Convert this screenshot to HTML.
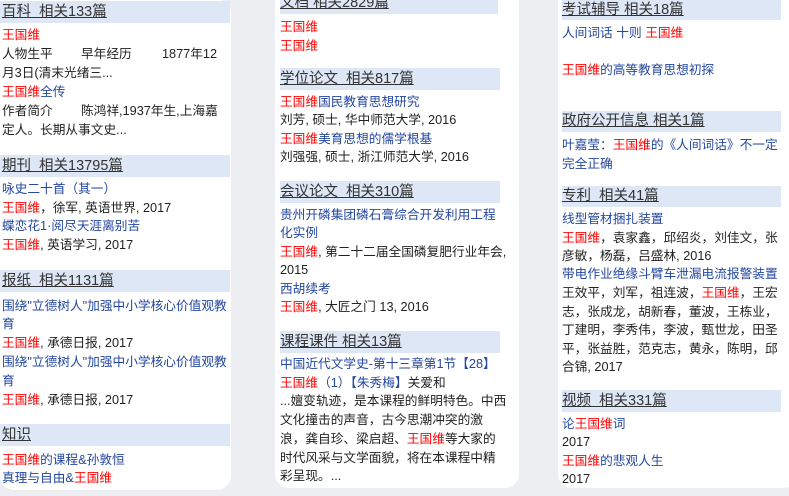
<!DOCTYPE html>
<html><head><meta charset="utf-8"><style>
html,body{margin:0;padding:0}
body{width:789px;height:496px;overflow:hidden;background:#eceef1;position:relative;font-family:"Liberation Sans","Noto Sans CJK SC",sans-serif;font-size:12.7px;color:#222}
.p{position:absolute;background:#fff;border-radius:0 0 14px 14px}
.l{position:absolute;height:19px;line-height:19px;white-space:nowrap}
.h{position:absolute;height:22px;line-height:22px;background:#dde7f5;font-size:14.5px;color:#333}
.h span{text-decoration:underline}
.r{color:#f00}.b{color:#2447a0}
</style></head><body>
<div class="p" style="left:0;top:0;width:231px;height:490px;border-radius:0 12px 14px 14px"></div>
<div class="p" style="left:275px;top:0;width:244px;height:488px"></div>
<div class="p" style="left:558px;top:0;width:240px;height:488px"></div>

<!-- panel 1 -->
<div class="h" style="left:0;top:1px;width:228px;padding-left:2px"><span>百科&nbsp; 相关133篇</span></div>
<div class="l r" style="left:2px;top:26px">王国维</div>
<div class="l" style="left:2px;top:45px">人物生平<span style="position:absolute;left:79px">早年经历</span><span style="position:absolute;left:160px">1877年12</span></div>
<div class="l" style="left:2px;top:64px">月3日(清末光绪三...</div>
<div class="l" style="left:2px;top:83px"><span class="r">王国维</span><span class="b">全传</span></div>
<div class="l" style="left:2px;top:102px">作者简介<span style="position:absolute;left:79px">陈鸿祥,1937年生,上海嘉</span></div>
<div class="l" style="left:2px;top:121px">定人。长期从事文史...</div>
<div class="h" style="left:0;top:155px;width:228px;padding-left:2px"><span>期刊&nbsp; 相关13795篇</span></div>
<div class="l b" style="left:2px;top:180px">咏史二十首（其一）</div>
<div class="l" style="left:2px;top:199px"><span class="r">王国维</span>，徐军, 英语世界, 2017</div>
<div class="l b" style="left:2px;top:217px">蝶恋花1·阅尽天涯离别苦</div>
<div class="l" style="left:2px;top:236px"><span class="r">王国维</span>, 英语学习, 2017</div>
<div class="h" style="left:0;top:270px;width:228px;padding-left:2px"><span>报纸&nbsp; 相关1131篇</span></div>
<div class="l b" style="left:2px;top:297px">围绕"立德树人"加强中小学核心价值观教</div>
<div class="l b" style="left:2px;top:315px">育</div>
<div class="l" style="left:2px;top:334px"><span class="r">王国维</span>, 承德日报, 2017</div>
<div class="l b" style="left:2px;top:353px">围绕"立德树人"加强中小学核心价值观教</div>
<div class="l b" style="left:2px;top:372px">育</div>
<div class="l" style="left:2px;top:391px"><span class="r">王国维</span>, 承德日报, 2017</div>
<div class="h" style="left:0;top:424px;width:228px;padding-left:2px"><span>知识</span></div>
<div class="l b" style="left:2px;top:451px"><span class="r">王国维</span>的课程&amp;孙敦恒</div>
<div class="l b" style="left:2px;top:469px">真理与自由&amp;<span class="r">王国维</span></div>

<!-- panel 2 -->
<div class="h" style="left:280px;top:-8px;width:218px;padding-left:0"><span>文档 相关2829篇</span></div>
<div class="l r" style="left:280px;top:18px">王国维</div>
<div class="l r" style="left:280px;top:37px">王国维</div>
<div class="h" style="left:280px;top:68px;width:220px"><span>学位论文&nbsp; 相关817篇</span></div>
<div class="l b" style="left:280px;top:93px"><span class="r">王国维</span>国民教育思想研究</div>
<div class="l" style="left:280px;top:111px">刘芳, 硕士, 华中师范大学, 2016</div>
<div class="l b" style="left:280px;top:130px"><span class="r">王国维</span>美育思想的儒学根基</div>
<div class="l" style="left:280px;top:148px">刘强强, 硕士, 浙江师范大学, 2016</div>
<div class="h" style="left:280px;top:181px;width:220px"><span>会议论文&nbsp; 相关310篇</span></div>
<div class="l b" style="left:280px;top:206px">贵州开磷集团磷石膏综合开发利用工程</div>
<div class="l b" style="left:280px;top:224px">化实例</div>
<div class="l" style="left:280px;top:243px"><span class="r">王国维</span>, 第二十二届全国磷复肥行业年会,</div>
<div class="l" style="left:280px;top:261px">2015</div>
<div class="l b" style="left:280px;top:280px">西胡续考</div>
<div class="l" style="left:280px;top:298px"><span class="r">王国维</span>, 大匠之门 13, 2016</div>
<div class="h" style="left:280px;top:331px;width:220px"><span>课程课件 相关13篇</span></div>
<div class="l b" style="left:280px;top:355px">中国近代文学史-第十三章第1节【28】</div>
<div class="l" style="left:280px;top:374px"><span class="r">王国维</span><span class="b">（1）【朱秀梅】</span>关爱和</div>
<div class="l" style="left:280px;top:392px">...嬗变轨迹，是本课程的鲜明特色。中西</div>
<div class="l" style="left:280px;top:411px">文化撞击的声音，古今思潮冲突的激</div>
<div class="l" style="left:280px;top:430px">浪，龚自珍、梁启超、<span class="r">王国维</span>等大家的</div>
<div class="l" style="left:280px;top:449px">时代风采与文学面貌，将在本课程中精</div>
<div class="l" style="left:280px;top:467px">彩呈现。...</div>

<!-- panel 3 -->
<div class="h" style="left:562px;top:0;width:219px;height:20px;line-height:20px"><span>考试辅导 相关18篇</span></div>
<div class="l b" style="left:562px;top:24px">人间词话 十则 <span class="r">王国维</span></div>
<div class="l b" style="left:562px;top:61px"><span class="r">王国维</span>的高等教育思想初探</div>
<div class="h" style="left:562px;top:111px;width:219px;height:21px;line-height:21px"><span>政府公开信息 相关1篇</span></div>
<div class="l b" style="left:562px;top:136px">叶嘉莹：<span class="r">王国维</span>的《人间词话》不一定</div>
<div class="l b" style="left:562px;top:155px">完全正确</div>
<div class="h" style="left:562px;top:186px;width:219px;height:21px;line-height:21px"><span>专利&nbsp; 相关41篇</span></div>
<div class="l b" style="left:562px;top:210px">线型管材捆扎装置</div>
<div class="l" style="left:562px;top:229px"><span class="r">王国维</span>，袁家鑫，邱绍炎，刘佳文，张</div>
<div class="l" style="left:562px;top:247px">彦敏，杨磊，吕盛林, 2016</div>
<div class="l b" style="left:562px;top:265px">带电作业绝缘斗臂车泄漏电流报警装置</div>
<div class="l" style="left:562px;top:284px">王效平，刘军，祖连波，<span class="r">王国维</span>，王宏</div>
<div class="l" style="left:562px;top:303px">志，张成龙，胡新春，董波，王栋业，</div>
<div class="l" style="left:562px;top:321px">丁建明，李秀伟，李波，甄世龙，田圣</div>
<div class="l" style="left:562px;top:340px">平，张益胜，范克志，黄永，陈明，邱</div>
<div class="l" style="left:562px;top:358px">合锦, 2017</div>
<div class="h" style="left:562px;top:390px;width:219px"><span>视频&nbsp; 相关331篇</span></div>
<div class="l b" style="left:562px;top:415px">论<span class="r">王国维</span>词</div>
<div class="l" style="left:562px;top:433px">2017</div>
<div class="l b" style="left:562px;top:452px"><span class="r">王国维</span>的悲观人生</div>
<div class="l" style="left:562px;top:470px">2017</div>
</body></html>
